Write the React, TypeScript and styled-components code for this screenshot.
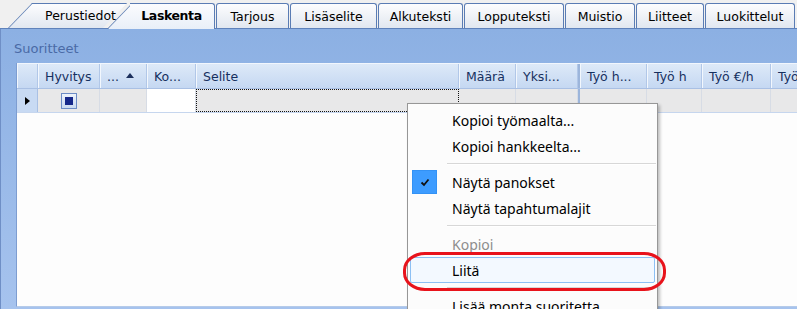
import React from "react";
import styled, { createGlobalStyle, css } from "styled-components";

const GlobalStyle = createGlobalStyle`
	html, body {
		margin: 0;
		padding: 0;
		background: #f0f0f0;
	}
	body {
		overflow: hidden;
	}
`;

const Screen = styled.div`
	position: relative;
	width: 797px;
	height: 309px;
	overflow: hidden;
	background: #f0f0f0;
	font-family: "DejaVu Sans", Tahoma, sans-serif;
	font-size: 12.5px;
`;

/* ---------- tabs ---------- */

const TabStrip = styled.div`
	display: flex;
	align-items: flex-end;
	height: 28px;
	padding-left: 8px;
	border-bottom: 1px solid #5f82bb;
`;

type TabShape = "plain" | "slant" | "slantFlat";

const tabBorder = "#5a7cb4";

const slantBase = css`
	content: "";
	position: absolute;
	z-index: -1;
	top: 0;
	bottom: 0;
	box-sizing: border-box;
	border: 1px solid ${tabBorder};
	border-bottom: none;
`;

const Tab = styled.div<{ $w: number; $active?: boolean; $shape?: TabShape; $pad?: number }>`
	position: relative;
	z-index: ${(p) => (p.$active ? 3 : 1)};
	flex: none;
	box-sizing: border-box;
	width: ${(p) => p.$w}px;
	height: ${(p) => (p.$active ? 26 : 25)}px;
	margin-bottom: ${(p) => (p.$active ? -1 : 0)}px;
	margin-right: 1px;
	padding-left: ${(p) => p.$pad || 0}px;
	display: flex;
	align-items: center;
	justify-content: center;
	padding-bottom: ${(p) => (p.$active ? 1 : 0)}px;
	color: #000;
	font-weight: ${(p) => (p.$active ? "bold" : "normal")};
	letter-spacing: ${(p) => (p.$active ? "-0.4px" : "0")};
	white-space: nowrap;
	--tab-bg: ${(p) =>
		p.$active
			? "linear-gradient(#fbfcfe, #e9eff8)"
			: "linear-gradient(#fdfdfe, #e1e7f0)"};

	${(p) =>
		(!p.$shape || p.$shape === "plain") &&
		css`
			border: 1px solid ${tabBorder};
			border-bottom: none;
			border-radius: 3px 3px 0 0;
			background: var(--tab-bg);
		`}

	${(p) =>
		p.$shape === "slant" &&
		css`
			margin-right: -21px;
			&::before {
				${slantBase};
				left: 0;
				width: ${p.$w - 25}px;
				background: var(--tab-bg);
				border-right: none;
				transform-origin: bottom left;
				transform: skewX(-44deg);
			}
		`}

	${(p) =>
		p.$shape === "slantFlat" &&
		css`
			&::before {
				${slantBase};
				left: 0;
				width: 40px;
				background: var(--tab-bg);
				border-right: none;
				transform-origin: bottom left;
				transform: skewX(-44deg);
			}
			&::after {
				${slantBase};
				left: 23px;
				right: 0;
				border-left: none;
				border-radius: 0 3px 0 0;
				background: var(--tab-bg);
			}
		`}
`;

/* ---------- panel + grid ---------- */

const Panel = styled.div`
	height: 280px;
	box-sizing: border-box;
	border-left: 1px solid #6f8fc6;
	background: linear-gradient(#8cb0e3, #a6c3ee);
`;

const SectionLabel = styled.div`
	height: 34px;
	box-sizing: border-box;
	padding: 12px 0 0 13px;
	line-height: 16px;
	font-size: 13px;
	color: #4a6aa6;
`;

const Grid = styled.div`
	margin-left: 15px;
	height: 244px;
	box-sizing: border-box;
	background: #fdfdfd;
	border-left: 1px solid #7d9dd1;
	border-bottom: 1px solid #b6cbe9;
	overflow: hidden;
`;

const HeaderRow = styled.div`
	display: flex;
	height: 26px;
	box-sizing: border-box;
	border-top: 1px solid #f1f6fd;
	border-bottom: 1px solid #a9c0e4;
	background: linear-gradient(#dde9f8, #c5d8f2);
`;

const HeadCell = styled.div<{ $w: number }>`
	flex: none;
	width: ${(p) => p.$w}px;
	box-sizing: border-box;
	padding-left: 7px;
	display: flex;
	align-items: center;
	gap: 7px;
	border-right: 1px solid #b1c7e8;
	box-shadow: inset 1px 0 #f2f7fd;
	color: #16305f;
	white-space: nowrap;
	overflow: hidden;
`;

const SortArrow = styled.span`
	width: 0;
	height: 0;
	border-left: 4px solid transparent;
	border-right: 4px solid transparent;
	border-bottom: 5px solid #1c2f5c;
	margin-bottom: 2px;
`;

const FrozenSplit = styled.div`
	flex: none;
	width: 2px;
	background: #9cb5db;
`;

const DataRow = styled.div`
	display: flex;
	height: 24px;
	box-sizing: border-box;
	border-bottom: 1px solid #c6d6ee;
`;

type CellTone = "gray" | "white" | "indicator" | "focus";

const DataCell = styled.div<{ $w: number; $tone?: CellTone }>`
	flex: none;
	width: ${(p) => p.$w}px;
	box-sizing: border-box;
	display: flex;
	align-items: center;
	justify-content: center;
	border-right: 1px solid #d7dce5;
	background: ${(p) =>
		p.$tone === "white" ? "#ffffff" : p.$tone === "indicator" ? "#c8daf3" : "#e8e8e9"};
	${(p) =>
		p.$tone === "indicator" &&
		css`
			border-right-color: #a9c0e4;
			justify-content: flex-start;
			padding-left: 8px;
		`}
	${(p) =>
		p.$tone === "focus" &&
		css`
			border: 1px dotted #111;
		`}
`;

const RowMarker = styled.span`
	width: 0;
	height: 0;
	border-top: 4px solid transparent;
	border-bottom: 4px solid transparent;
	border-left: 5px solid #000;
`;

const CheckBox = styled.span`
	width: 16px;
	height: 16px;
	box-sizing: border-box;
	border: 1px solid #6c8cc6;
	background: linear-gradient(#edf3fc, #c9d9f0);
	display: flex;
	align-items: center;
	justify-content: center;
	&::after {
		content: "";
		width: 8px;
		height: 8px;
		background: #16288a;
	}
`;

/* ---------- context menu ---------- */

const Menu = styled.div`
	position: absolute;
	z-index: 10;
	left: 407px;
	top: 103px;
	width: 251px;
	box-sizing: border-box;
	padding: 3px 0 6px;
	background: #fcfcfc;
	border: 1px solid #979797;
	box-shadow: 2px 2px 3px rgba(0, 0, 0, 0.25);
	font-family: "Noto Sans", "Open Sans", sans-serif;
	font-size: 14px;
`;

const MenuItem = styled.div<{ $hover?: boolean; $disabled?: boolean }>`
	display: flex;
	align-items: center;
	height: 26px;
	margin: 0 2px;
	padding-left: 1px;
	box-sizing: border-box;
	border: 1px solid transparent;
	border-radius: 2px;
	color: ${(p) => (p.$disabled ? "#8d8d8d" : "#000")};
	white-space: nowrap;
	${(p) =>
		p.$hover &&
		css`
			border-color: #8cc0f4;
			background: #f3f9ff;
		`}
`;

const MenuIcon = styled.span<{ $checked?: boolean }>`
	flex: none;
	width: 25px;
	height: 24px;
	display: flex;
	align-items: center;
	justify-content: center;
	${(p) =>
		p.$checked &&
		css`
			background: #3d9cff;
			box-shadow: inset 0 0 0 1px #3392f5;
		`}
`;

const MenuLabel = styled.span`
	margin-left: 15px;
`;

const MenuSeparator = styled.div`
	height: 10px;
	margin-left: 39px;
	position: relative;
	&::before {
		content: "";
		position: absolute;
		left: 0;
		right: 1px;
		top: 4px;
		height: 1px;
		background: #d7d7d7;
		border-bottom: 1px solid #ffffff;
	}
`;

const Annotation = styled.div`
	position: absolute;
	z-index: 20;
	left: 403px;
	top: 252px;
	width: 263px;
	height: 39px;
	box-sizing: border-box;
	border: 3px solid #e8131b;
	border-radius: 22px / 18px;
`;

const Check = () => (
	<svg width="10" height="9" viewBox="0 0 10 9">
		<path d="M1.5 4.5 L4 7 L8.5 1.5" fill="none" stroke="#111" strokeWidth="1.8" />
	</svg>
);

const tabs = [
	{ label: "Tarjous", w: 73 },
	{ label: "Lisäselite", w: 87 },
	{ label: "Alkuteksti", w: 85 },
	{ label: "Lopputeksti", w: 100 },
	{ label: "Muistio", w: 70 },
	{ label: "Liitteet", w: 68 },
	{ label: "Luokittelut", w: 90 },
];

const leftCols = [
	{ label: "Hyvitys", w: 62 },
	{ label: "...", w: 47, sort: true },
	{ label: "Ko...", w: 49 },
	{ label: "Selite", w: 263 },
	{ label: "Määrä", w: 57 },
	{ label: "Yksi...", w: 62 },
];

const rightCols = [
	{ label: "Työ h...", w: 67 },
	{ label: "Työ h", w: 55 },
	{ label: "Työ €/h", w: 69 },
	{ label: "Työ €", w: 100 },
];

export default function App() {
	return (
		<Screen>
			<GlobalStyle />
			<TabStrip>
				<Tab $w={120} $shape="slant" $pad={25}>
					Perustiedot
				</Tab>
				<Tab $w={108} $shape="slantFlat" $pad={21} $active>
					Laskenta
				</Tab>
				{tabs.map((t) => (
					<Tab key={t.label} $w={t.w}>
						{t.label}
					</Tab>
				))}
			</TabStrip>

			<Panel>
				<SectionLabel>Suoritteet</SectionLabel>
				<Grid>
					<HeaderRow>
						<HeadCell $w={21} />
						{leftCols.map((c) => (
							<HeadCell key={c.label + c.w} $w={c.w}>
								{c.label}
								{c.sort && <SortArrow />}
							</HeadCell>
						))}
						<FrozenSplit />
						{rightCols.map((c) => (
							<HeadCell key={c.label} $w={c.w}>
								{c.label}
							</HeadCell>
						))}
					</HeaderRow>
					<DataRow>
						<DataCell $w={21} $tone="indicator">
							<RowMarker />
						</DataCell>
						<DataCell $w={62}>
							<CheckBox />
						</DataCell>
						<DataCell $w={47} />
						<DataCell $w={49} $tone="white" />
						<DataCell $w={263} $tone="focus" />
						<DataCell $w={57} />
						<DataCell $w={62} />
						<FrozenSplit />
						{rightCols.map((c) => (
							<DataCell key={c.label} $w={c.w} />
						))}
					</DataRow>
				</Grid>
			</Panel>

			<Menu>
				<MenuItem>
					<MenuIcon />
					<MenuLabel>Kopioi työmaalta...</MenuLabel>
				</MenuItem>
				<MenuItem>
					<MenuIcon />
					<MenuLabel>Kopioi hankkeelta...</MenuLabel>
				</MenuItem>
				<MenuSeparator />
				<MenuItem>
					<MenuIcon $checked>
						<Check />
					</MenuIcon>
					<MenuLabel>Näytä panokset</MenuLabel>
				</MenuItem>
				<MenuItem>
					<MenuIcon />
					<MenuLabel>Näytä tapahtumalajit</MenuLabel>
				</MenuItem>
				<MenuSeparator />
				<MenuItem $disabled>
					<MenuIcon />
					<MenuLabel>Kopioi</MenuLabel>
				</MenuItem>
				<MenuItem $hover>
					<MenuIcon />
					<MenuLabel>Liitä</MenuLabel>
				</MenuItem>
				<MenuSeparator />
				<MenuItem>
					<MenuIcon />
					<MenuLabel>Lisää monta suoritetta</MenuLabel>
				</MenuItem>
			</Menu>
			<Annotation />
		</Screen>
	);
}
